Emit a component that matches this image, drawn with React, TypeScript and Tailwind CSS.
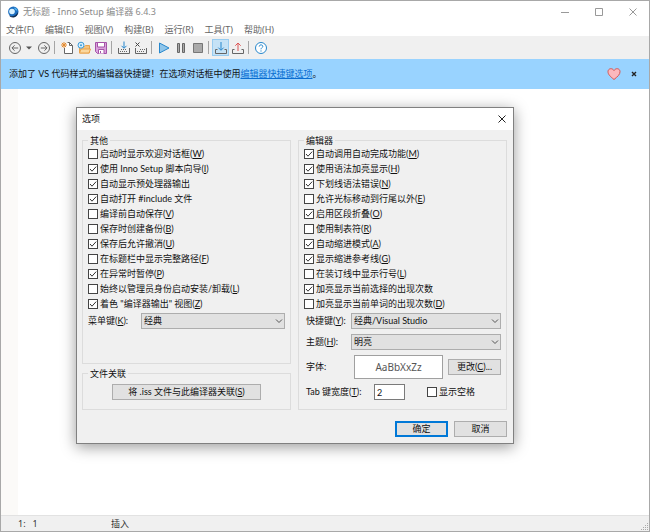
import type { ReactNode } from "react";

type Option = { text: string; hotkey?: string; checked?: boolean };

const menus = ["文件(F)", "编辑(E)", "视图(V)", "构建(B)", "运行(R)", "工具(T)", "帮助(H)"];

const generalOptions: Option[] = [
  { text: "启动时显示欢迎对话框", hotkey: "W" },
  { text: "使用 Inno Setup 脚本向导", hotkey: "I", checked: true },
  { text: "自动显示预处理器输出", checked: true },
  { text: "自动打开 #include 文件", checked: true },
  { text: "编译前自动保存", hotkey: "V" },
  { text: "保存时创建备份", hotkey: "B" },
  { text: "保存后允许撤消", hotkey: "U", checked: true },
  { text: "在标题栏中显示完整路径", hotkey: "F" },
  { text: "在异常时暂停", hotkey: "P", checked: true },
  { text: "始终以管理员身份启动安装/卸载", hotkey: "L" },
  { text: "着色 \"编译器输出\" 视图", hotkey: "Z", checked: true },
];

const editorOptions: Option[] = [
  { text: "自动调用自动完成功能", hotkey: "M", checked: true },
  { text: "使用语法加亮显示", hotkey: "H", checked: true },
  { text: "下划线语法错误", hotkey: "N", checked: true },
  { text: "允许光标移动到行尾以外", hotkey: "E" },
  { text: "启用区段折叠", hotkey: "O", checked: true },
  { text: "使用制表符", hotkey: "R" },
  { text: "自动缩进模式", hotkey: "A", checked: true },
  { text: "显示缩进参考线", hotkey: "G", checked: true },
  { text: "在装订线中显示行号", hotkey: "L" },
  { text: "加亮显示当前选择的出现次数", checked: true },
  { text: "加亮显示当前单词的出现次数", hotkey: "D" },
];

const Hotkey = ({ k }: { k: string }) => (
  <span>(<u>{k}</u>)</span>
);

const Check = ({ text, hotkey, checked }: Option) => (
  <label className="flex h-[15px] items-center gap-[2px] whitespace-nowrap">
    <span className="grid">
      <input
        type="checkbox"
        defaultChecked={checked}
        className="peer col-start-1 row-start-1 size-[10px] appearance-none border border-[#444] bg-white"
      />
      <svg viewBox="0 0 10 10" className="pointer-events-none invisible col-start-1 row-start-1 size-[10px] peer-checked:visible">
        <path d="M2 5l2 2.2L8.2 2.6" fill="none" stroke="#333" strokeWidth="1" />
      </svg>
    </span>
    <span>{text}{hotkey && <Hotkey k={hotkey} />}</span>
  </label>
);

const Dropdown = ({ id, value }: { id: string; value: string }) => (
  <div className="grid flex-1">
    <select id={id} className="col-start-1 row-start-1 h-4 appearance-none border border-[#adadad] bg-[#e1e1e1] pl-[2px] leading-[14px]">
      <option>{value}</option>
    </select>
    <svg viewBox="0 0 8 8" className="pointer-events-none col-start-1 row-start-1 mr-[2px] size-2 self-center justify-self-end">
      <path d="M1 2.5l3 3 3-3" fill="none" stroke="#555" strokeWidth="1" />
    </svg>
  </div>
);

const Group = ({ title, className = "", children }: { title: string; className?: string; children: ReactNode }) => (
  <fieldset className={`border border-[#dcdcdc] px-[5px] ${className}`}>
    <legend className="px-[2px] leading-[11px]">{title}</legend>
    {children}
  </fieldset>
);

const Tool = ({ label, active, children }: { label: string; active?: boolean; children: ReactNode }) => (
  <button
    aria-label={label}
    className={active ? "grid size-[17px] place-items-center border border-[#99ccf0] bg-[#c5e2f6]" : "grid size-[17px] place-items-center"}
  >
    <svg viewBox="0 0 16 16" className="size-4 shrink-0" fill="none" stroke="#666" strokeWidth="1">
      {children}
    </svg>
  </button>
);

const Separator = () => <span className="mr-[3px] ml-[2px] h-[13px] w-px bg-[#a5a5a5]" />;

const Toolbar = () => (
  <div className="flex h-[23px] items-center bg-[#f0f0f0] pl-[5px]">
    <Tool label="后退">
      <circle cx="8" cy="8" r="5.5" />
      <path d="M11.2 8H5M7.6 5.3L4.9 8l2.7 2.7" />
    </Tool>
    <button aria-label="历史" className="grid w-3 place-items-center">
      <svg viewBox="0 0 6 4" className="h-1 w-[6px]"><path d="M0 .5h6L3 3.5z" fill="#555" /></svg>
    </button>
    <Tool label="前进">
      <circle cx="8" cy="8" r="5.5" />
      <path d="M4.8 8H11M8.4 5.3L11.1 8l-2.7 2.7" />
    </Tool>
    <Separator />
    <Tool label="新建">
      <path d="M5.5 8v5.5h8v-8l-3-3H8.5M10.5 2.5v3h3" fill="#fff" />
      <path d="M5 2v6M2 5h6M2.9 2.9l4.2 4.2M7.1 2.9L2.9 7.1" stroke="#e58a2e" />
    </Tool>
    <Tool label="打开">
      <path d="M3.5 13V6.5h5l1-1h4V13z" fill="#f5c27b" stroke="#e9a24b" />
      <path d="M3.5 13l1.5-4h9.5l-1.5 4z" fill="#fbd79d" stroke="#e9a24b" />
      <circle cx="5" cy="5.2" r="3" fill="#d9effc" stroke="#3b9bd9" />
      <circle cx="5" cy="5.2" r="1" fill="#3b9bd9" stroke="none" />
    </Tool>
    <Tool label="保存">
      <path d="M2.5 2.5h11v11h-9l-2-2z" fill="#d9a3dc" stroke="#a552a8" />
      <path d="M4.5 2.5h7v4.5h-7zM5.5 13.5v-4h5.5v4" fill="#fff" stroke="#a552a8" />
      <path d="M7.5 11v2" stroke="#a552a8" />
    </Tool>
    <Separator />
    <Tool label="编译">
      <path d="M2.5 8v5.5h11V8" />
      <path d="M4 11.5h8M5 9.5h6" strokeDasharray="1 1" />
      <path d="M8 1.5V8M5.5 5.8L8 8.3l2.5-2.5" stroke="#2787cc" />
    </Tool>
    <Tool label="停止编译">
      <path d="M2.5 8v5.5h11V8" />
      <path d="M4 11.5h8M7 9.5h5" strokeDasharray="1 1" />
      <path d="M2.5 2.5l4 4M6.5 2.5l-4 4" stroke="#444" />
    </Tool>
    <Separator />
    <Tool label="运行">
      <path d="M3.5 3v10l9.5-5z" fill="#8fc5ea" stroke="#2787cc" />
    </Tool>
    <Tool label="暂停">
      <path d="M4.5 3.5h2v9h-2zM9.5 3.5h2v9h-2z" fill="#aaa" />
    </Tool>
    <Tool label="终止">
      <path d="M3.5 3.5h9v9h-9z" fill="#aaa" stroke="#777" />
    </Tool>
    <Separator />
    <Tool label="目标安装" active>
      <path d="M4.5 9.5h-2v4h11v-4h-2" />
      <path d="M8 2v8M5.3 7.6L8 10.3l2.7-2.7" stroke="#2787cc" />
    </Tool>
    <Tool label="目标卸载">
      <path d="M4.5 9.5h-2v4h11v-4h-2" />
      <path d="M8 11V3M5.3 5.7L8 3l2.7 2.7" stroke="#dd5555" />
    </Tool>
    <Separator />
    <Tool label="帮助">
      <circle cx="8" cy="8" r="5.5" stroke="#2787cc" fill="#fff" />
      <path d="M6.2 6.6c0-2.4 3.6-2.2 3.6-.2C9.8 7.6 8 7.7 8 9.3M8 10.4v1.2" stroke="#2787cc" />
    </Tool>
  </div>
);

const OptionsDialog = () => (
  <div
    role="dialog"
    aria-label="选项"
    className="absolute top-[106px] left-[75px] w-[438px] border border-[#808080] bg-[#f0f0f0] font-['Lato','Noto_Sans_CJK_SC',sans-serif] text-[9px] leading-3 text-[#111] shadow-[0_3px_14px_rgba(0,0,0,0.4)]"
  >
    <div className="flex h-[22px] items-center justify-between bg-white pr-[7px] pl-[5px]">
      <h2>选项</h2>
      <button aria-label="关闭">
        <svg viewBox="0 0 8 8" className="size-2"><path d="M.5.5l7 7M7.5.5l-7 7" stroke="#222" strokeWidth="1" /></svg>
      </button>
    </div>

    <div className="grid grid-cols-2 gap-[7px] pt-[5px] pr-[6px] pl-[5px]">
      <div className="flex flex-col gap-1">
        <Group title="其他" className="flex-1">
          {generalOptions.map((o) => <Check key={o.text} {...o} />)}
          <div className="mt-[2px] flex items-center">
            <label htmlFor="menukey" className="w-[53px]">菜单键<Hotkey k="K" />:</label>
            <Dropdown id="menukey" value="经典" />
          </div>
        </Group>
        <Group title="文件关联">
          <div className="px-6 pt-[5px] pb-[9px]">
            <button className="h-4 w-full border border-[#adadad] bg-[#e1e1e1]">
              将 .iss 文件与此编译器关联<Hotkey k="S" />
            </button>
          </div>
        </Group>
      </div>

      <Group title="编辑器" className="pb-[9px]">
        {editorOptions.map((o) => <Check key={o.text} {...o} />)}
        <div className="mt-[2px] flex flex-col gap-[5px] pl-[2px]">
          <div className="flex items-center">
            <label htmlFor="keys" className="w-[45px]">快捷键<Hotkey k="Y" />:</label>
            <Dropdown id="keys" value="经典/Visual Studio" />
          </div>
          <div className="flex items-center">
            <label htmlFor="theme" className="w-[45px]">主题<Hotkey k="H" />:</label>
            <Dropdown id="theme" value="明亮" />
          </div>
          <div className="flex items-center">
            <span className="w-12">字体:</span>
            <span className="flex h-6 flex-1 items-center justify-center border border-[#a0a0a0] bg-white font-['Noto_Sans',sans-serif] text-[10px] text-[#555]">AaBbXxZz</span>
            <button className="ml-[5px] h-4 w-[53px] border border-[#adadad] bg-[#e1e1e1]">更改<Hotkey k="C" />...</button>
          </div>
          <div className="flex items-center">
            <label htmlFor="tabwidth" className="w-[68px]">Tab 键宽度<Hotkey k="T" />:</label>
            <input id="tabwidth" defaultValue="2" className="mr-[22px] h-4 w-[31px] border border-[#7a7a7a] bg-white px-[2px]" />
            <Check text="显示空格" />
          </div>
        </div>
      </Group>
    </div>

    <div className="flex justify-end gap-[6px] pt-[11px] pr-[6px] pb-[6px]">
      <button className="h-4 w-[53px] border-2 border-[#0078d7] bg-[#e1e1e1] leading-3">确定</button>
      <button className="h-4 w-[53px] border border-[#adadad] bg-[#e1e1e1]">取消</button>
    </div>
  </div>
);

export default function App() {
  return (
    <div className="relative flex min-h-screen flex-col border border-[#a8a8a8] bg-white font-['Noto_Sans','Noto_Sans_CJK_SC',sans-serif] text-[9px] leading-3">
      <header className="flex h-[22px] items-center pl-[6px] text-[#8a8a8a]">
        <svg viewBox="0 0 12 12" className="size-3">
          <circle cx="6.3" cy="5.8" r="5.2" fill="#1d6fc0" />
          <path d="M2 9.5c3 1.5 7 .5 9-3.5 0 3-2 5.5-5 5.5-2 0-3-.8-4-2z" fill="#152c4d" />
          <circle cx="5" cy="5.5" r="2.8" fill="#d7f1ff" />
          <path d="M7 1.5c2 .3 3 1.5 3.3 3.2C9 4.5 7.5 3.5 7 1.5z" fill="#58b7ee" />
        </svg>
        <h1 className="ml-1 flex-1">无标题 - Inno Setup 编译器 6.4.3</h1>
        <div className="flex gap-[26px] pr-3">
          <button aria-label="最小化"><svg viewBox="0 0 8 8" className="size-2"><path d="M0 4.5h8" stroke="#999" /></svg></button>
          <button aria-label="最大化"><svg viewBox="0 0 8 8" className="size-2"><path d="M.5.5h7v7h-7z" fill="none" stroke="#999" /></svg></button>
          <button aria-label="关闭窗口"><svg viewBox="0 0 8 8" className="size-2"><path d="M.5.5l7 7M7.5.5l-7 7" stroke="#999" /></svg></button>
        </div>
      </header>

      <nav className="flex h-[13px] items-center gap-[11px] pl-[5px] text-[#666]">
        {menus.map((m) => <button key={m}>{m}</button>)}
      </nav>

      <Toolbar />

      <div className="flex h-[30px] items-center bg-[#99d3ff] pr-3 pl-2 font-['Lato','Noto_Sans_CJK_SC',sans-serif] text-[#111]">
        <p className="flex-1">
          添加了 VS 代码样式的编辑器快捷键！在选项对话框中使用<a href="#" className="text-[#0a6ed1] underline">编辑器快捷键选项</a>。
        </p>
        <button aria-label="捐助">
          <svg viewBox="0 0 14 14" className="size-[14px]">
            <path d="M7 12.5C3 9.3 1 7.3 1 4.7 1 1.3 5.3.6 7 3.6c1.7-3 6-2.3 6 1.1 0 2.6-2 4.6-6 7.8z" fill="#fbb8bd" stroke="#d9534f" />
          </svg>
        </button>
        <button aria-label="关闭提示" className="ml-[10px]">
          <svg viewBox="0 0 6 6" className="size-[6px]"><path d="M1 1l4 4M5 1L1 5" stroke="#222" strokeWidth="1.4" /></svg>
        </button>
      </div>

      <main className="flex flex-1">
        <div className="w-[17px] bg-[#fbfaf8]" />
        <textarea aria-label="脚本" className="flex-1 resize-none outline-none" />
      </main>

      <footer className="flex h-4 items-center border-t border-[#e2e2e2] bg-[#f0f0f0] pl-[17px] text-[#333]">
        <span className="w-[93px] whitespace-pre">1:   1</span>
        <span className="flex-1">插入</span>
        <svg viewBox="0 0 8 8" className="size-2 self-end">
          <path d="M6 0h1v1H6zM4 2h1v1H4zM6 2h1v1H6zM2 4h1v1H2zM4 4h1v1H4zM6 4h1v1H6zM0 6h1v1H0zM2 6h1v1H2zM4 6h1v1H4zM6 6h1v1H6z" fill="#aaa" />
        </svg>
      </footer>

      <OptionsDialog />
    </div>
  );
}
